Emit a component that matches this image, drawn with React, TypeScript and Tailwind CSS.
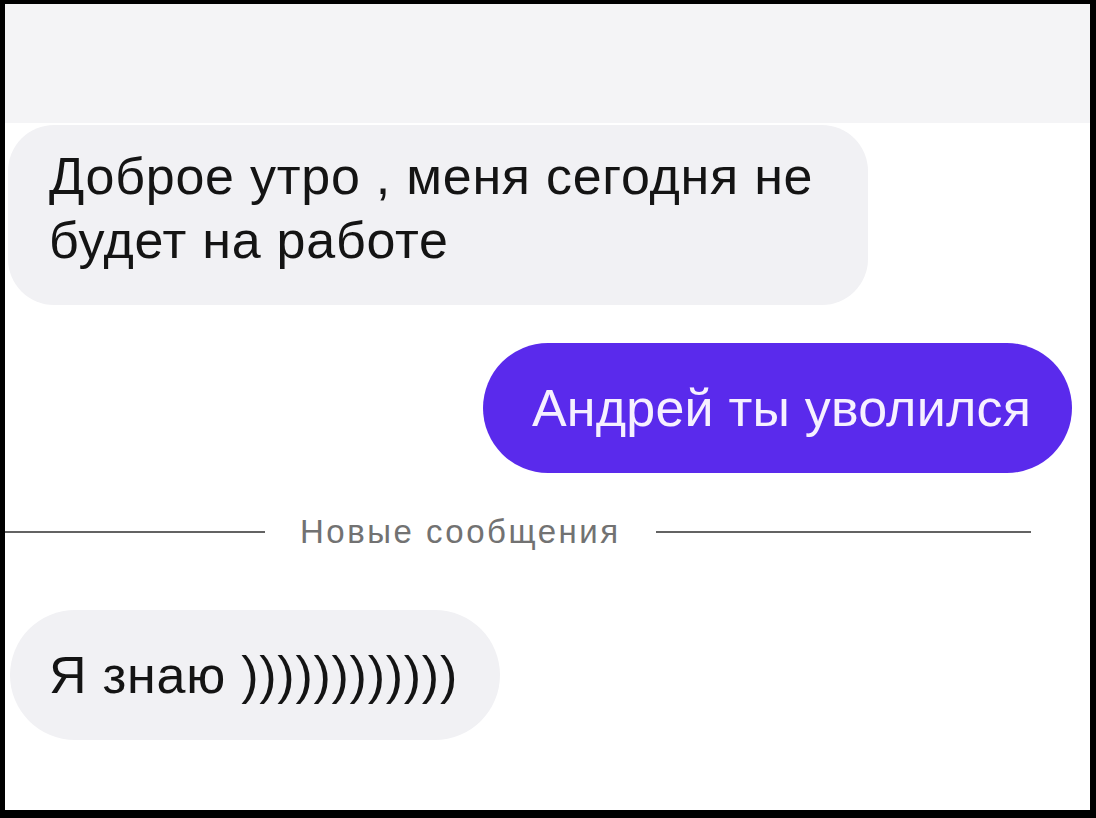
export default function App() {
  return (
    <div
      className="h-[818px] w-[1096px] bg-black pt-[4px] pl-[5px] pr-[6px] pb-[8px]"
      style={{ fontFamily: '"Liberation Sans", Arial, sans-serif' }}
    >
      <div className="flex h-full w-full flex-col bg-white">
        {/* faded header strip */}
        <div className="h-[119px] w-full shrink-0 bg-[#f4f4f6]" />

        {/* incoming message */}
        <div className="ml-[3px] mt-[2px] flex h-[180px] w-[860px] flex-col rounded-[46px] bg-[#f1f1f4] pl-[41px] pt-[19px] text-[52px] leading-[64px] tracking-[0.75px] text-[#141414]">
          <span>Доброе утро , меня сегодня не</span>
          <span>будет на работе</span>
        </div>

        {/* outgoing message */}
        <div className="mr-[18px] mt-[38px] flex h-[130px] w-[589px] items-center justify-center self-end rounded-full bg-[#5a2aec] pl-[8px] text-[52px] tracking-[0.2px] text-[#f6f0ff]">
          Андрей ты уволился
        </div>

        {/* unread divider */}
        <div className="mt-[41px] flex h-[36px] items-center">
          <div className="h-[2px] w-[260px] bg-[#636363]" />
          <span className="ml-[35px] mr-[35px] text-[33px] leading-[36px] tracking-[2.5px] text-[#727272]">
            Новые сообщения
          </span>
          <div className="h-[2px] w-[375px] bg-[#636363]" />
        </div>

        {/* incoming reply */}
        <div className="ml-[5px] mt-[60px] flex h-[130px] w-[490px] items-center rounded-full bg-[#f1f1f4] pl-[39px] text-[52px] tracking-[0.75px] text-[#141414]">
          Я знаю ))))))))))))
        </div>
      </div>
    </div>
  );
}
